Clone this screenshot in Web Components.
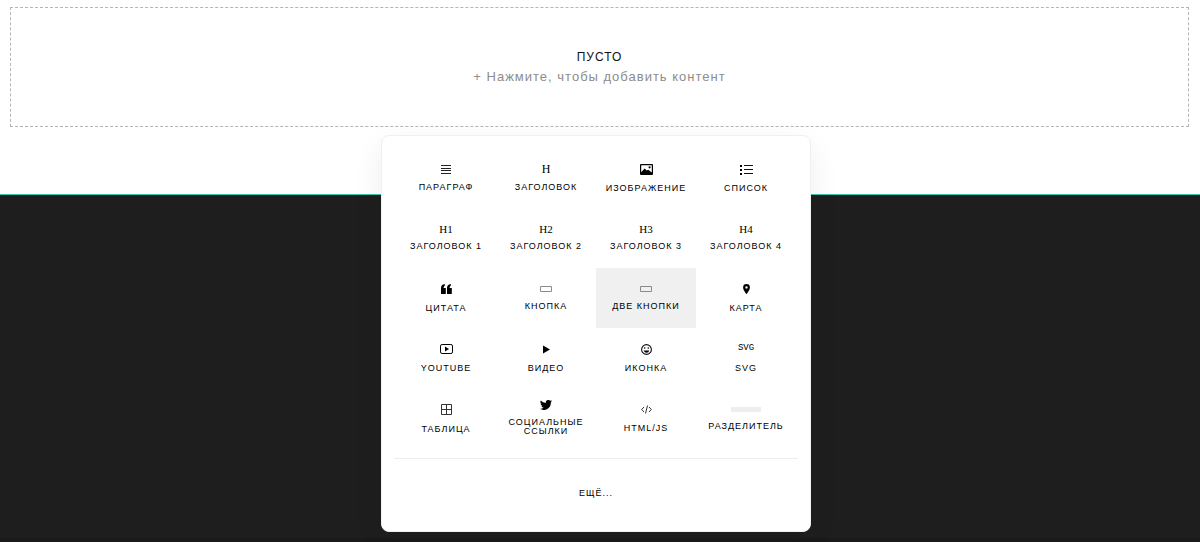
<!DOCTYPE html>
<html lang="ru">
<head>
<meta charset="utf-8">
<title>Редактор блоков</title>
<style>
body { margin: 0; font-family: "Liberation Sans", Arial, sans-serif; background: #1e1e1e; }
</style>
</head>
<body>
<block-editor>
  <empty-block heading="Пусто">+ Нажмите, чтобы добавить контент</empty-block>
  <block-picker slot="picker"></block-picker>
</block-editor>
<script>
const mount = (el, html) => { el.attachShadow({ mode: 'open' }).innerHTML = html; };

customElements.define('block-editor', class extends HTMLElement {
  constructor() {
    super();
    mount(this, `<style>
      :host { display: flex; flex-direction: column; min-height: 100vh; position: relative; box-sizing: border-box; }
      main { background: #fff; padding: 7px 11px 67px 10px; border-bottom: 1px solid #3cc4ae; }
      footer { flex: 1; background: #1e1e1e; border-bottom: 4px solid #1a1a1a; }
      ::slotted(block-picker) { position: absolute; top: 135px; left: calc(50% - 219px); }
    </style><main><slot></slot></main><footer></footer><slot name="picker"></slot>`);
  }
});

customElements.define('empty-block', class extends HTMLElement {
  constructor() {
    super();
    mount(this, `<style>
      :host { display: block; }
      button { box-sizing: border-box; width: 100%; min-height: 120px; border: 1px dashed #b4b4b4; background: #fff;
        display: flex; flex-direction: column; align-items: center; justify-content: center; padding: 0;
        font: 13px/20px "Liberation Sans", Arial, sans-serif; letter-spacing: 1px; color: #8c8c8c; cursor: pointer; }
      b { font-weight: 400; font-size: 12px; color: #111; text-transform: uppercase; }
    </style><button type="button"><b></b><span><slot></slot></span></button>`);
  }
  connectedCallback() { this.shadowRoot.querySelector('b').textContent = this.getAttribute('heading'); }
});

const svg = (w, h, body) => `<svg width="${w}" height="${h}" viewBox="0 0 ${w} ${h}" aria-hidden="true">${body}</svg>`;
const bars = svg(10, 9, '<path d="M0 .5h10M0 3.5h10M0 5.5h10M0 8.5h10" stroke="#222"/>');
const rect = svg(12, 6, '<path d="M.5.5h11v5H.5z" fill="none" stroke="#8a8a8a"/>');
const ITEMS = [
  ['Параграф', 9, bars],
  ['Заголовок', 9, '<i class="h">H</i>'],
  ['Изображение', 11, svg(13, 11, '<path fill-rule="evenodd" d="M1 0h11a1 1 0 0 1 1 1v9a1 1 0 0 1-1 1H1a1 1 0 0 1-1-1V1a1 1 0 0 1 1-1zM1.2 1.2v7L4.600 4.500l2.200 2 1.400-.7 3.600 2.800V1.200zM9.600 2.200a1.100 1.100 0 1 1 0 2.200 1.100 1.100 0 0 1 0-2.200z"/>')],
  ['Список', 11, svg(13, 11, '<path d="M4 1.500h9M4 5.500h9M4 9.500h9" stroke="#111"/><path d="M0 1h2v2H0zM0 5h2v2H0zM0 9h2v2H0z"/>')],
  ['Заголовок 1', 7, '<i>H1</i>'],
  ['Заголовок 2', 7, '<i>H2</i>'],
  ['Заголовок 3', 7, '<i>H3</i>'],
  ['Заголовок 4', 7, '<i>H4</i>'],
  ['Цитата', 11, svg(11, 10, '<path d="M0 10V4Q0 .5 3.800 0v1.800Q2.600 2.300 2.600 4h2.200v6zM6 10V4Q6 .5 9.800 0v1.800Q8.600 2.300 8.600 4h2.200v6z"/>')],
  ['Кнопка', 7, rect],
  ['Две кнопки', 7, rect, 'active'],
  ['Карта', 11, svg(7, 10, '<path fill-rule="evenodd" d="M3.500 0a3.400 3.400 0 0 1 3.400 3.400C6.900 6 3.500 10 3.500 10S.1 6 .1 3.400A3.400 3.400 0 0 1 3.500 0zm0 2.200a1.200 1.200 0 1 0 0 2.400 1.200 1.200 0 0 0 0-2.400z"/>')],
  ['YouTube', 11, svg(13, 10, '<rect x=".5" y=".5" width="12" height="9" rx="1.600" fill="none" stroke="#000"/><path d="M5 2.500 9 5 5 7.500z"/>')],
  ['Видео', 11, svg(7, 9, '<path d="M0 .5 7 4.500 0 8.500z"/>')],
  ['Иконка', 11, svg(11, 11, '<circle cx="5.500" cy="5.500" r="4.900" fill="none" stroke="#111" stroke-width="1.100"/><circle cx="3.700" cy="4" r=".8"/><circle cx="7.300" cy="4" r=".8"/><path d="M2.700 6.500h5.600Q7.700 8.800 5.500 8.800T2.700 6.500z"/>')],
  ['SVG', 11, '<i class="mono">SVG</i>'],
  ['Таблица', 13, svg(11, 11, '<path d="M.5.5h10v10H.5zM5.500 0v11M0 5.500h11" fill="none" stroke="#333"/>')],
  ['Социальные ссылки', 9, svg(12, 10, '<path d="M12 1.200a5 5 0 0 1-1.400.4A2.400 2.400 0 0 0 11.700.2a5 5 0 0 1-1.600.6 2.460 2.460 0 0 0-4.200 2.300A7 7 0 0 1 .8.500a2.460 2.460 0 0 0 .8 3.300 2.400 2.400 0 0 1-1.100-.3 2.460 2.460 0 0 0 2 2.400 2.500 2.500 0 0 1-1.100.1 2.460 2.460 0 0 0 2.300 1.700A5 5 0 0 1 0 8.800a7 7 0 0 0 10.800-6.300A5 5 0 0 0 12 1.200z"/>')],
  ['HTML/JS', 11, svg(11, 9, '<path d="M3 2 .7 4.500 3 7M8 2l2.300 2.500L8 7M6.500.5l-2 8" fill="none" stroke="#333"/>')],
  ['Разделитель', 7, svg(30, 5, '<path d="M0 0h30v5H0z" fill="#eee"/>')],
];

customElements.define('block-item', class extends HTMLElement {
  constructor() {
    super();
    mount(this, `<style>
      :host { display: block; }
      button { width: 100%; height: 60px; border: 0; padding: 0; background: none; color: #000; cursor: pointer;
        display: flex; flex-direction: column; align-items: center; justify-content: center; gap: 9px;
        font: 9px/9px "Liberation Sans", Arial, sans-serif; letter-spacing: 1px; text-transform: uppercase; }
      :host([active]) button { background: #f0f0f0; }
      .icon { display: flex; align-items: center; justify-content: center; }
      svg { display: block; }
      i { font: 11px/9px "Liberation Serif", serif; letter-spacing: 0; }
      .h { font-size: 12px; }
      .mono { font: 9px/9px "Liberation Mono", monospace; align-self: flex-start; }
    </style><button type="button"><span class="icon"></span><span><slot></slot></span></button>`);
  }
  set icon([height, body]) {
    const box = this.shadowRoot.querySelector('.icon');
    box.style.height = height + 'px';
    box.innerHTML = body;
  }
});

customElements.define('block-picker', class extends HTMLElement {
  constructor() {
    super();
    mount(this, `<style>
      :host { display: block; box-sizing: border-box; width: 430px; padding: 12px 12px 8px; background: #fff;
        border: 1px solid #f0f0f0; border-radius: 8px; box-shadow: 0 10px 30px rgba(0,0,0,.07); }
      .grid { display: grid; grid-template-columns: repeat(4, 100px); justify-content: center; padding-bottom: 10px; }
      hr { margin: 0; border: 0; border-top: 1px solid #eee; }
      .more { display: block; width: 100%; height: 60px; margin-top: 4px; padding: 0; border: 0; background: none; color: #000;
        font: 9px/12px "Liberation Sans", Arial, sans-serif; letter-spacing: 1px; text-transform: uppercase; cursor: pointer; }
    </style><div class="grid"></div><hr><button class="more" type="button">Ещё...</button>`);
    const grid = this.shadowRoot.querySelector('.grid');
    for (const [label, height, body, active] of ITEMS) {
      const item = document.createElement('block-item');
      item.textContent = label;
      item.icon = [height, body];
      if (active) item.setAttribute('active', '');
      grid.append(item);
    }
  }
});
</script>
</body>
</html>
